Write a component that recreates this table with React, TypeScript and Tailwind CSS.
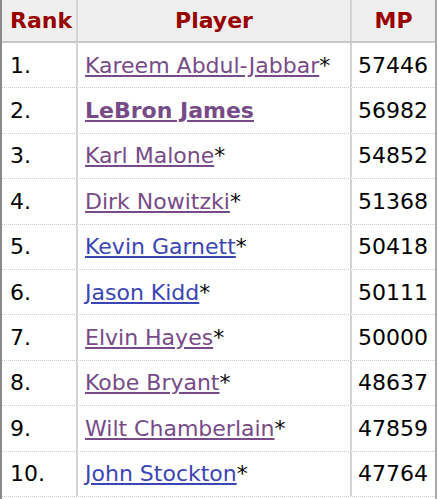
import React from 'react';

type Row = { rank: string; name: string; star: boolean; visited: boolean; bold?: boolean; mp: string };

const rows: Row[] = [
  { rank: '1.', name: 'Kareem Abdul-Jabbar', star: true, visited: true, mp: '57446' },
  { rank: '2.', name: 'LeBron James', star: false, visited: true, bold: true, mp: '56982' },
  { rank: '3.', name: 'Karl Malone', star: true, visited: true, mp: '54852' },
  { rank: '4.', name: 'Dirk Nowitzki', star: true, visited: true, mp: '51368' },
  { rank: '5.', name: 'Kevin Garnett', star: true, visited: false, mp: '50418' },
  { rank: '6.', name: 'Jason Kidd', star: true, visited: false, mp: '50111' },
  { rank: '7.', name: 'Elvin Hayes', star: true, visited: true, mp: '50000' },
  { rank: '8.', name: 'Kobe Bryant', star: true, visited: true, mp: '48637' },
  { rank: '9.', name: 'Wilt Chamberlain', star: true, visited: true, mp: '47859' },
  { rank: '10.', name: 'John Stockton', star: true, visited: false, mp: '47764' },
];

export default function App() {
  return (
    <div className="w-[437px] h-[499px] overflow-hidden bg-white border-l-2 border-r-2 border-l-[#8a8a8a] border-r-[#a8a8a8] font-['DejaVu_Sans',Verdana,sans-serif] text-[22px] text-black">
      <div className="flex h-[43px] bg-[#efefef] border-b-2 border-[#c8c8c8] font-bold text-[#990000]">
        <div className="w-[76px] flex items-center pl-[8px] border-r-2 border-[#d4d4d4]">Rank</div>
        <div className="w-[274px] flex items-center justify-center border-r-2 border-[#d4d4d4]">Player</div>
        <div className="flex-1 flex items-center justify-center">MP</div>
      </div>
      {rows.map((r) => (
        <div key={r.rank} className="flex h-[45.4px] border-b border-dotted border-[#cdcdcd]">
          <div className="w-[76px] flex items-center pl-[8px] border-r-2 border-[#d4d4d4]">{r.rank}</div>
          <div className="w-[274px] flex items-center pl-[7px] border-r-2 border-[#d4d4d4]">
            <a
              href="#"
              className={`underline ${r.visited ? 'text-[#774b88]' : 'text-[#3a46b4]'} ${r.bold ? 'font-bold' : ''}`}
            >
              {r.name}
            </a>
            {r.star && <span>*</span>}
          </div>
          <div className="flex-1 flex items-center justify-end pr-[7px]">{r.mp}</div>
        </div>
      ))}
    </div>
  );
}
